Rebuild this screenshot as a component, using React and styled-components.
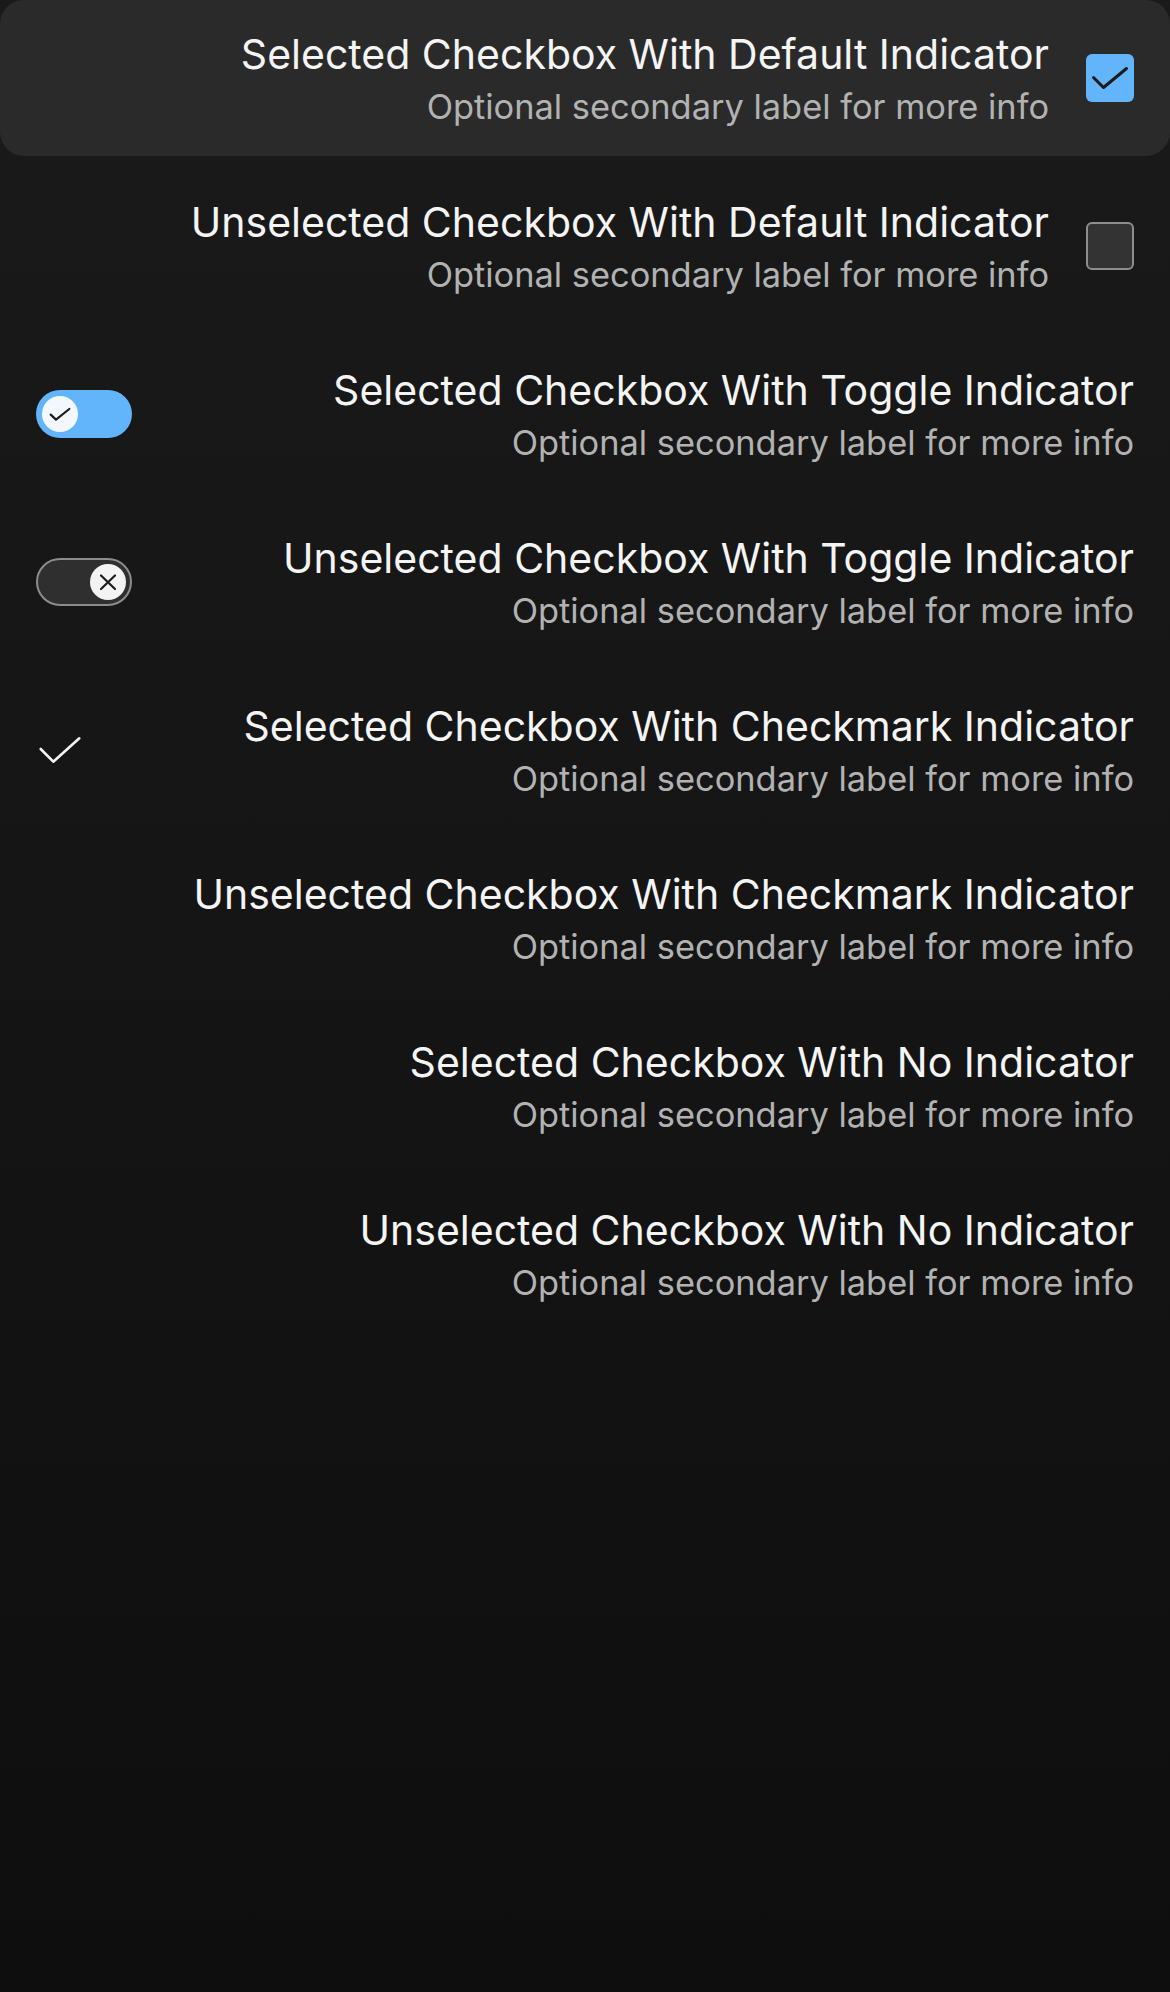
import React from "react";
import styled, { createGlobalStyle } from "styled-components";

const Global = createGlobalStyle`
  html, body { margin: 0; padding: 0; }
  body {
    width: 1170px;
    min-height: 1992px;
    background: linear-gradient(180deg, #1a1a1a 0%, #141414 55%, #0e0e0e 100%);
    font-family: Inter, "Noto Sans", sans-serif;
    -webkit-font-smoothing: antialiased;
  }
`;

const Page = styled.div`
  width: 1170px;
  min-height: 1992px;
  display: flex;
  flex-direction: column;
  gap: 12px;
`;

const Row = styled.div`
  height: 156px;
  box-sizing: border-box;
  padding: 0 36px 0 36px;
  display: flex;
  align-items: center;
  gap: 37px;
  border-radius: 24px;
  background: ${(p) => (p.$highlight ? "#2a2a2a" : "transparent")};
`;

const TextBlock = styled.div`
  flex: 1;
  display: flex;
  flex-direction: column;
  align-items: flex-end;
  text-align: right;
  padding-top: 4px;
`;

const Title = styled.div`
  font-size: 41px;
  line-height: 48px;
  color: #f4f4f4;
  white-space: nowrap;
`;

const Subtitle = styled.div`
  font-size: 34.4px;
  line-height: 48px;
  margin-top: 5px;
  color: #b2b2b2;
  white-space: nowrap;
`;

const Box = styled.div`
  width: 48px;
  height: 48px;
  box-sizing: border-box;
  border-radius: 6px;
  flex: none;
  display: flex;
  background: ${(p) => (p.$on ? "#62b5fa" : "#333333")};
  border: ${(p) => (p.$on ? "none" : "2.5px solid #8e8e8e")};
  svg { display: block; }
`;

const Track = styled.div`
  width: 96px;
  height: 48px;
  box-sizing: border-box;
  border-radius: 24px;
  flex: none;
  display: flex;
  align-items: center;
  padding: 0 ${(p) => (p.$on ? "6px" : "4px")};
  justify-content: ${(p) => (p.$on ? "flex-start" : "flex-end")};
  background: ${(p) => (p.$on ? "#62b5fa" : "#2f2f2f")};
  border: ${(p) => (p.$on ? "none" : "2.5px solid #8c8c8c")};
`;

const Knob = styled.div`
  width: 36px;
  height: 36px;
  border-radius: 50%;
  background: ${(p) => (p.$on ? "#f3f8ff" : "#f3f3f3")};
  display: flex;
  svg { display: block; }
`;

const CheckSlot = styled.div`
  width: 48px;
  height: 48px;
  flex: none;
  display: flex;
  svg { display: block; }
`;

function DefaultIndicator({ on }) {
  return (
    <Box $on={on}>
      {on && (
        <svg width="48" height="48" viewBox="0 0 48 48">
          <path d="M7.5 23.5 L17.5 33.5 L40.5 14.5" fill="none" stroke="#1a1a1a" strokeWidth="3" strokeLinecap="round" strokeLinejoin="round" />
        </svg>
      )}
    </Box>
  );
}

function ToggleIndicator({ on }) {
  return (
    <Track $on={on}>
      <Knob $on={on}>
        {on ? (
          <svg width="36" height="36" viewBox="0 0 36 36">
            <path d="M8.7 18.6 L14 23.6 L27.3 13" fill="none" stroke="#1c1c1c" strokeWidth="2.2" strokeLinecap="round" strokeLinejoin="round" />
          </svg>
        ) : (
          <svg width="36" height="36" viewBox="0 0 36 36">
            <path d="M11 11.5 L25 25 M25 11.5 L11 25" fill="none" stroke="#1c1c1c" strokeWidth="2.2" strokeLinecap="round" />
          </svg>
        )}
      </Knob>
    </Track>
  );
}

function CheckmarkIndicator({ on }) {
  return (
    <CheckSlot>
      {on && (
        <svg width="48" height="48" viewBox="0 0 48 48">
          <path d="M4.7 23 L17.3 35.7 L43.3 12.3" fill="none" stroke="#f2f2f2" strokeWidth="2.6" strokeLinecap="round" strokeLinejoin="round" />
        </svg>
      )}
    </CheckSlot>
  );
}

const items = [
  { title: "Selected Checkbox With Default Indicator", kind: "default", on: true, highlight: true },
  { title: "Unselected Checkbox With Default Indicator", kind: "default", on: false },
  { title: "Selected Checkbox With Toggle Indicator", kind: "toggle", on: true },
  { title: "Unselected Checkbox With Toggle Indicator", kind: "toggle", on: false },
  { title: "Selected Checkbox With Checkmark Indicator", kind: "check", on: true },
  { title: "Unselected Checkbox With Checkmark Indicator", kind: "check", on: false },
  { title: "Selected Checkbox With No Indicator", kind: "none", on: true },
  { title: "Unselected Checkbox With No Indicator", kind: "none", on: false },
];

function Item({ item }) {
  const text = (
    <TextBlock>
      <Title>{item.title}</Title>
      <Subtitle>Optional secondary label for more info</Subtitle>
    </TextBlock>
  );
  if (item.kind === "default") {
    return (
      <Row $highlight={item.highlight}>
        {text}
        <DefaultIndicator on={item.on} />
      </Row>
    );
  }
  if (item.kind === "toggle") {
    return (
      <Row>
        <ToggleIndicator on={item.on} />
        {text}
      </Row>
    );
  }
  if (item.kind === "check") {
    return (
      <Row>
        <CheckmarkIndicator on={item.on} />
        {text}
      </Row>
    );
  }
  return <Row>{text}</Row>;
}

export default function App() {
  return (
    <>
      <Global />
      <Page>
        {items.map((it) => (
          <Item key={it.title} item={it} />
        ))}
      </Page>
    </>
  );
}
